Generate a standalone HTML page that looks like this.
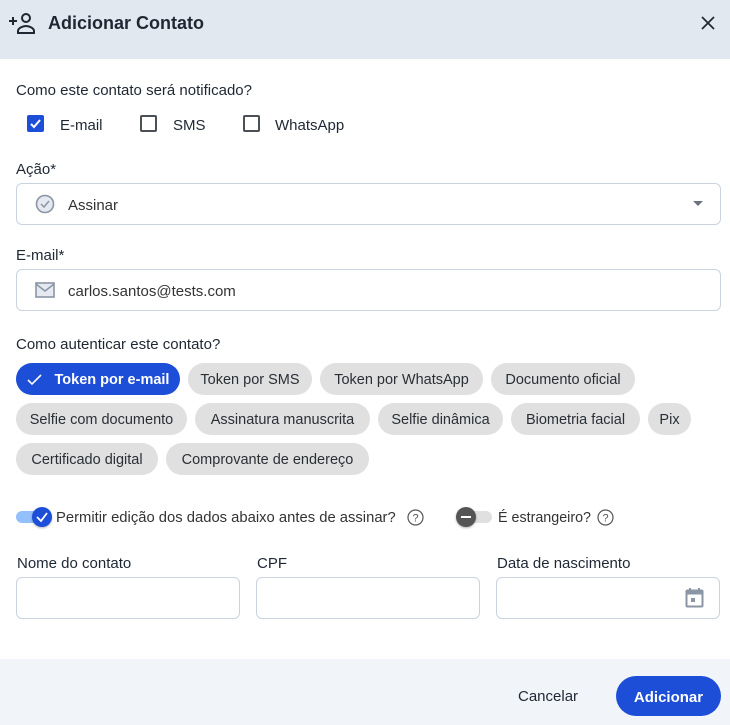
<!DOCTYPE html>
<html><head><meta charset="utf-8"><style>
*{box-sizing:border-box;margin:0;padding:0}
body{width:730px;height:725px;background:#fff;font-family:"Liberation Sans",sans-serif;color:#1f2733;position:relative;overflow:hidden;font-size:15px}
.abs{position:absolute}
.hdr{left:0;top:0;width:730px;height:59px;background:#e2e8f0}
.ftr{left:0;top:659px;width:730px;height:66px;background:#f1f4f8}
.lbl{font-size:15px;color:#1f2733}
.inp{border:1px solid #cbd3de;border-radius:6px;background:#fff}
.chip{height:32px;border-radius:16px;background:#e0e0e0;font-size:14.5px;color:#2a2f36;display:flex;align-items:center;justify-content:center;white-space:nowrap;padding-top:2px}
.cb{width:17px;height:17px;border:2px solid #4b4f56;border-radius:2px}
</style></head><body>
<div class="abs hdr"></div>
<svg class="abs" style="left:8px;top:12px" width="28" height="22" viewBox="0 0 28 22"><path d="M1 9h8M5 5v8" stroke="#1f2733" stroke-width="2"/><circle cx="18" cy="6" r="4" fill="none" stroke="#1f2733" stroke-width="2"/><path d="M10 21v-2c0-3 5-5 8-5s8 2 8 5v2z" fill="none" stroke="#1f2733" stroke-width="2"/></svg>
<div class="abs" style="left:48px;top:13px;font-size:18px;font-weight:bold;color:#1f2733">Adicionar Contato</div>
<svg class="abs" style="left:701px;top:16px" width="14" height="14"><path d="M1 1l12 12M13 1L1 13" stroke="#1f2733" stroke-width="1.7"/></svg>

<div class="abs lbl" style="left:16px;top:82px">Como este contato será notificado?</div>
<div class="abs" style="left:27px;top:115px;width:17px;height:17px;background:#1d4ed8;border-radius:2px"></div>
<svg class="abs" style="left:27px;top:115px" width="17" height="17"><path d="M4 9l3 3 6-7" stroke="#fff" stroke-width="2" fill="none"/></svg>
<div class="abs lbl" style="left:60px;top:117px">E-mail</div>
<div class="abs cb" style="left:140px;top:115px"></div>
<div class="abs lbl" style="left:173px;top:117px">SMS</div>
<div class="abs cb" style="left:243px;top:115px"></div>
<div class="abs lbl" style="left:275px;top:117px">WhatsApp</div>

<div class="abs lbl" style="left:16px;top:161px">Ação*</div>
<div class="abs inp" style="left:16px;top:183px;width:705px;height:42px"></div>
<svg class="abs" style="left:35px;top:194px" width="20" height="20"><circle cx="10" cy="10" r="8.5" fill="#e6eaf0" stroke="#8a95a5" stroke-width="1.6"/><path d="M6 10l3 3 5-6" stroke="#8a95a5" stroke-width="1.5" fill="none"/></svg>
<div class="abs lbl" style="left:68px;top:197px;color:#333">Assinar</div>
<svg class="abs" style="left:693px;top:201px" width="10" height="6"><path d="M0 0h10L5 5z" fill="#6b7280"/></svg>

<div class="abs lbl" style="left:16px;top:247px">E-mail*</div>
<div class="abs inp" style="left:16px;top:269px;width:705px;height:42px"></div>
<svg class="abs" style="left:35px;top:282px" width="20" height="16"><rect x="1" y="1" width="18" height="14" fill="#e6eaf0" stroke="#8a95a5" stroke-width="1.6"/><path d="M1 2l9 7 9-7" stroke="#8a95a5" stroke-width="1.5" fill="none"/></svg>
<div class="abs lbl" style="left:68px;top:283px;color:#333">carlos.santos@tests.com</div>

<div class="abs lbl" style="left:16px;top:336px">Como autenticar este contato?</div>
<div class="abs chip" style="left:16px;top:363px;width:164px;background:#1d4ed8;color:#fff;font-weight:bold"><svg width="16" height="12" style="margin-right:12px"><path d="M1 6l4 4 9-9" stroke="#fff" stroke-width="1.6" fill="none"/></svg>Token por e-mail</div>
<div class="abs chip" style="left:188px;top:363px;width:124px">Token por SMS</div>
<div class="abs chip" style="left:320px;top:363px;width:163px">Token por WhatsApp</div>
<div class="abs chip" style="left:491px;top:363px;width:144px">Documento oficial</div>
<div class="abs chip" style="left:16px;top:403px;width:171px">Selfie com documento</div>
<div class="abs chip" style="left:195px;top:403px;width:175px">Assinatura manuscrita</div>
<div class="abs chip" style="left:378px;top:403px;width:125px">Selfie dinâmica</div>
<div class="abs chip" style="left:511px;top:403px;width:129px">Biometria facial</div>
<div class="abs chip" style="left:648px;top:403px;width:43px">Pix</div>
<div class="abs chip" style="left:16px;top:443px;width:142px">Certificado digital</div>
<div class="abs chip" style="left:166px;top:443px;width:203px">Comprovante de endereço</div>

<div class="abs" style="left:16px;top:511px;width:32px;height:12px;border-radius:6px;background:#93c0fb"></div>
<div class="abs" style="left:32px;top:507px;width:20px;height:20px;border-radius:50%;background:#1d4ed8;box-shadow:0 1px 2px rgba(0,0,0,.3)"></div>
<svg class="abs" style="left:32px;top:507px" width="20" height="20"><path d="M5 10l4 4 6-8" stroke="#fff" stroke-width="1.8" fill="none"/></svg>
<div class="abs lbl" style="left:56px;top:510px;color:#333;font-size:14.8px">Permitir edição dos dados abaixo antes de assinar?</div>
<svg class="abs" style="left:407px;top:509px" width="17" height="17"><circle cx="8.5" cy="8.5" r="7.5" fill="none" stroke="#555" stroke-width="1.2"/><text x="8.5" y="12.5" font-size="11" text-anchor="middle" fill="#555" font-family="Liberation Sans">?</text></svg>
<div class="abs" style="left:460px;top:511px;width:32px;height:12px;border-radius:6px;background:#e0e0e0"></div>
<div class="abs" style="left:456px;top:507px;width:20px;height:20px;border-radius:50%;background:#555;box-shadow:0 1px 2px rgba(0,0,0,.3)"></div>
<div class="abs" style="left:461px;top:516px;width:10px;height:2px;background:#fff"></div>
<div class="abs lbl" style="left:498px;top:510px;color:#333;font-size:14.3px">É estrangeiro?</div>
<svg class="abs" style="left:597px;top:509px" width="17" height="17"><circle cx="8.5" cy="8.5" r="7.5" fill="none" stroke="#555" stroke-width="1.2"/><text x="8.5" y="12.5" font-size="11" text-anchor="middle" fill="#555" font-family="Liberation Sans">?</text></svg>

<div class="abs lbl" style="left:17px;top:555px">Nome do contato</div>
<div class="abs lbl" style="left:257px;top:555px">CPF</div>
<div class="abs lbl" style="left:497px;top:555px">Data de nascimento</div>
<div class="abs inp" style="left:16px;top:577px;width:224px;height:42px"></div>
<div class="abs inp" style="left:256px;top:577px;width:224px;height:42px"></div>
<div class="abs inp" style="left:496px;top:577px;width:224px;height:42px"></div>
<svg class="abs" style="left:685px;top:587px" width="20" height="22"><rect x="1.5" y="3.5" width="16" height="16" rx="1" fill="none" stroke="#8a95a5" stroke-width="2"/><rect x="1.5" y="3.5" width="16" height="4" fill="#8a95a5"/><path d="M5 1v4M14 1v4" stroke="#8a95a5" stroke-width="2"/><rect x="6" y="11" width="4" height="4" fill="#8a95a5"/></svg>

<div class="abs ftr"></div>
<div class="abs" style="left:518px;top:688px;font-size:15px;color:#1f2733">Cancelar</div>
<div class="abs" style="left:616px;top:676px;width:105px;height:40px;border-radius:20px;background:#1d4ed8;color:#fff;font-weight:bold;font-size:15px;display:flex;align-items:center;justify-content:center;padding-top:2px">Adicionar</div>
</body></html>
